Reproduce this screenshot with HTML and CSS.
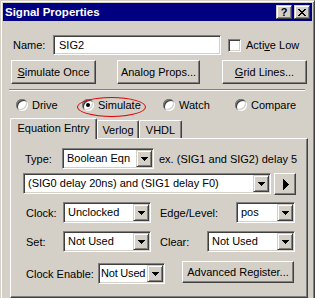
FILE: index.html
```html
<!DOCTYPE html>
<html>
<head>
<meta charset="utf-8">
<link rel="stylesheet" href="styles.css">
</head>
<body>
<div class="window">
  <div class="titlebar">
    <span class="title">Signal Properties</span>
    <div class="caps">
      <span class="cbtn q">?</span>
      <span class="cbtn"><svg width="8" height="7" viewBox="0 0 8 7" shape-rendering="crispEdges"><g fill="#000"><rect x="0" y="0" width="2" height="1"/><rect x="6" y="0" width="2" height="1"/><rect x="1" y="1" width="2" height="1"/><rect x="5" y="1" width="2" height="1"/><rect x="2" y="2" width="4" height="1"/><rect x="3" y="3" width="2" height="1"/><rect x="2" y="4" width="4" height="1"/><rect x="1" y="5" width="2" height="1"/><rect x="5" y="5" width="2" height="1"/><rect x="0" y="6" width="2" height="1"/><rect x="6" y="6" width="2" height="1"/></g></svg></span>
    </div>
  </div>
  <div class="client">
    <div class="row name-row">
      <span class="name-lbl">Name:</span>
      <div class="field name-field">SIG2</div>
      <span class="check"></span>
      <span class="check-lbl">Acti<u>v</u>e Low</span>
    </div>
    <div class="row btn-row">
      <div class="btn b1"><span><u>S</u>imulate Once</span></div>
      <div class="btn b2"><span>Analog Props...</span></div>
      <div class="btn b3"><span><u>G</u>rid Lines...</span></div>
    </div>
    <div class="sep"></div>
    <div class="row radio-row">
      <div class="ritem r1"><span class="radio"></span><span>Drive</span></div>
      <div class="ritem r2"><span class="radio on"></span><span>Simulate</span><span class="ring"></span></div>
      <div class="ritem r3"><span class="radio"></span><span>Watch</span></div>
      <div class="ritem r4"><span class="radio"></span><span>Compare</span></div>
    </div>
    <div class="tabs">
      <div class="tab active t1">Equation Entry</div>
      <div class="tab t2">Verlog</div>
      <div class="tab t3">VHDL</div>
    </div>
    <div class="panel">
      <div class="prow pr1">
        <span class="plbl l-type">Type:</span>
        <div class="combo c-type"><span class="ctext">Boolean Eqn</span><span class="drop"><svg width="7" height="4" viewBox="0 0 7 4" shape-rendering="crispEdges"><g fill="#000"><rect x="0" y="0" width="7" height="1"/><rect x="1" y="1" width="5" height="1"/><rect x="2" y="2" width="3" height="1"/><rect x="3" y="3" width="1" height="1"/></g></svg></span></div>
        <span class="ex">ex. (SIG1 and SIG2) delay 5</span>
      </div>
      <div class="prow pr2">
        <div class="combo c-long"><span class="ctext">(SIG0 delay 20ns) and (SIG1 delay F0)</span><span class="drop"><svg width="7" height="4" viewBox="0 0 7 4" shape-rendering="crispEdges"><g fill="#000"><rect x="0" y="0" width="7" height="1"/><rect x="1" y="1" width="5" height="1"/><rect x="2" y="2" width="3" height="1"/><rect x="3" y="3" width="1" height="1"/></g></svg></span></div>
        <div class="btn play"><svg width="6" height="11" viewBox="0 0 6 11" shape-rendering="crispEdges"><g fill="#000"><rect x="0" y="0" width="1" height="11"/><rect x="1" y="1" width="1" height="9"/><rect x="2" y="2" width="1" height="7"/><rect x="3" y="3" width="1" height="5"/><rect x="4" y="4" width="1" height="3"/><rect x="5" y="5" width="1" height="1"/></g></svg></div>
      </div>
      <div class="prow pr3">
        <span class="plbl l-clock">Clock:</span>
        <div class="combo c-88"><span class="ctext">Unclocked</span><span class="drop"><svg width="7" height="4" viewBox="0 0 7 4" shape-rendering="crispEdges"><g fill="#000"><rect x="0" y="0" width="7" height="1"/><rect x="1" y="1" width="5" height="1"/><rect x="2" y="2" width="3" height="1"/><rect x="3" y="3" width="1" height="1"/></g></svg></span></div>
        <span class="plbl l-edge">Edge/Level:</span>
        <div class="combo c-pos"><span class="ctext">pos</span><span class="drop"><svg width="7" height="4" viewBox="0 0 7 4" shape-rendering="crispEdges"><g fill="#000"><rect x="0" y="0" width="7" height="1"/><rect x="1" y="1" width="5" height="1"/><rect x="2" y="2" width="3" height="1"/><rect x="3" y="3" width="1" height="1"/></g></svg></span></div>
      </div>
      <div class="prow pr4">
        <span class="plbl l-clock">Set:</span>
        <div class="combo c-88"><span class="ctext">Not Used</span><span class="drop"><svg width="7" height="4" viewBox="0 0 7 4" shape-rendering="crispEdges"><g fill="#000"><rect x="0" y="0" width="7" height="1"/><rect x="1" y="1" width="5" height="1"/><rect x="2" y="2" width="3" height="1"/><rect x="3" y="3" width="1" height="1"/></g></svg></span></div>
        <span class="plbl l-clear">Clear:</span>
        <div class="combo c-88"><span class="ctext">Not Used</span><span class="drop"><svg width="7" height="4" viewBox="0 0 7 4" shape-rendering="crispEdges"><g fill="#000"><rect x="0" y="0" width="7" height="1"/><rect x="1" y="1" width="5" height="1"/><rect x="2" y="2" width="3" height="1"/><rect x="3" y="3" width="1" height="1"/></g></svg></span></div>
      </div>
      <div class="prow pr5">
        <span class="plbl l-ce">Clock Enable:</span>
        <div class="combo c-ce"><span class="ctext">Not Used</span><span class="drop"><svg width="7" height="4" viewBox="0 0 7 4" shape-rendering="crispEdges"><g fill="#000"><rect x="0" y="0" width="7" height="1"/><rect x="1" y="1" width="5" height="1"/><rect x="2" y="2" width="3" height="1"/><rect x="3" y="3" width="1" height="1"/></g></svg></span></div>
        <div class="btn adv"><span>Advanced Register...</span></div>
      </div>
    </div>
  </div>
</div>
</body>
</html>
```
FILE: styles.css
```css
* { box-sizing: border-box; }
html, body { margin: 0; padding: 0; }
body {
  background: #d4d0c8;
  font-family: "Liberation Sans", Arial, sans-serif;
  font-size: 11px;
  color: #000;
  overflow: hidden;
}
u { text-decoration: underline; text-underline-offset: 1px; }

.window {
  width: 315px;
  height: 302px;
  background: #d4d0c8;
  border: 1px solid;
  border-color: #d4d0c8 #404040 #404040 #d4d0c8;
  box-shadow: inset 1px 1px #fff, inset -1px -1px #808080;
  padding: 2px;
}

.titlebar {
  height: 18px;
  background: #000080;
  display: flex;
  align-items: center;
  justify-content: space-between;
  padding: 0 2px 0 2px;
}
.title { color: #fff; font-weight: bold; font-size: 11.5px; }
.caps { display: flex; gap: 2px; }
.cbtn {
  width: 16px; height: 14px;
  background: #d4d0c8;
  border: 1px solid;
  border-color: #d4d0c8 #404040 #404040 #d4d0c8;
  box-shadow: inset 1px 1px #fff, inset -1px -1px #808080;
  display: flex; align-items: center; justify-content: center;
}
.cbtn.q { font-weight: bold; font-size: 11px; line-height: 12px; }

.row { display: flex; align-items: center; }

.name-row { margin-top: 14px; height: 20px; }
.name-lbl { margin-left: 10px; width: 40px; }
.field, .combo {
  background: #fff;
  border: 1px solid;
  border-color: #808080 #fff #fff #808080;
  box-shadow: inset 1px 1px #404040, inset -1px -1px #d4d0c8;
}
.name-field { width: 168px; height: 20px; padding: 0 0 0 5px; line-height: 18px; }
.check {
  margin-left: 7px;
  width: 13px; height: 13px;
  background: #fff;
  border: 1px solid;
  border-color: #808080 #fff #fff #808080;
  box-shadow: inset 1px 1px #404040, inset -1px -1px #d4d0c8;
}
.check-lbl { margin-left: 5px; }

.btn {
  background: #d4d0c8;
  border: 1px solid;
  border-color: #fff #404040 #404040 #fff;
  box-shadow: inset -1px -1px #808080;
  display: flex; align-items: center; justify-content: center;
}
.btn-row { margin-top: 5px; height: 24px; }
.btn-row .btn { height: 24px; }
.b1 { margin-left: 8px; width: 85px; }
.b2 { margin-left: 21px; width: 83px; }
.b3 { margin-left: 22px; width: 85px; }

.sep {
  margin: 5px 0 0 6px;
  width: 296px; height: 2px;
  border-top: 1px solid #808080;
  border-bottom: 1px solid #fff;
}

.radio-row { margin-top: 6px; height: 16px; }
.ritem { display: flex; align-items: center; gap: 4px; position: relative; }
.r1 { margin-left: 13px; width: 66px; }
.r2 { width: 81px; }
.r3 { width: 72px; }
.radio {
  width: 12px; height: 12px;
  border-radius: 50%;
  background: #fff;
  box-shadow: inset 1px 1px #808080, inset -1px -1px #fff, inset 2px 2px #404040, inset -2px -2px #d4d0c8;
  display: flex; align-items: center; justify-content: center;
}
.radio.on::after {
  content: "";
  width: 4px; height: 4px;
  border-radius: 50%;
  background: #000;
}
.ring {
  position: absolute;
  left: -5px; top: -2px;
  width: 69px; height: 20px;
  border: 1px solid #e00000;
  border-radius: 50%;
}

.tabs {
  margin: 5px 0 0 7px;
  height: 20px;
  display: flex;
  align-items: flex-end;
}
.tab {
  height: 18px;
  background: #d4d0c8;
  border-top: 1px solid #fff;
  border-left: 1px solid #fff;
  border-right: 1px solid #404040;
  box-shadow: inset -1px 0 #808080;
  border-radius: 2px 2px 0 0;
  display: flex; align-items: center; justify-content: center;
}
.tab.active {
  height: 21px;
  margin-bottom: -1px;
  position: relative;
  z-index: 1;
  padding-bottom: 2px;
}
.t1 { width: 87px; }
.t2 { width: 42px; }
.t3 { width: 43px; }

.panel {
  margin-left: 7px;
  width: 298px;
  height: 160px;
  border: 1px solid;
  border-color: #fff #404040 #404040 #fff;
  box-shadow: inset -1px -1px #808080;
}
.prow { display: flex; align-items: center; }
.pr1 { margin-top: 9px; height: 21px; }
.pr2 { margin-top: 4px; height: 22px; align-items: flex-start; }
.pr3 { margin-top: 7px; height: 21px; }
.pr4 { margin-top: 8px; height: 21px; }
.pr5 { margin-top: 9px; height: 23px; align-items: flex-start; }
.pr5 .plbl { align-self: center; margin-top: 2px; }

.plbl { flex: none; }
.l-type { margin-left: 14px; width: 37px; }
.l-clock { margin-left: 15px; width: 37px; }
.l-edge { margin-left: 9px; width: 76px; }
.l-clear { margin-left: 9px; width: 47px; }
.l-ce { margin-left: 15px; width: 72px; }

.combo {
  height: 21px;
  padding: 1px;
  display: flex;
  flex: none;
}
.ctext { flex: 1; padding-left: 3px; line-height: 17px; white-space: nowrap; overflow: hidden; }
.drop {
  width: 16px; height: 17px;
  flex: none;
  background: #d4d0c8;
  border: 1px solid;
  border-color: #d4d0c8 #404040 #404040 #d4d0c8;
  box-shadow: inset 1px 1px #fff, inset -1px -1px #808080;
  display: flex; align-items: center; justify-content: center;
}
.c-type { width: 92px; }
.c-long { margin-left: 12px; width: 248px; }
.c-88 { width: 88px; }
.c-pos { width: 59px; }
.c-ce { width: 67px; margin-top: 2px; }
.c-ce .ctext { padding-left: 1px; letter-spacing: -0.2px; overflow: visible; }
.ex { margin-left: 5px; white-space: nowrap; }

.play { margin-left: 3px; width: 22px; height: 22px; padding-left: 1px; }
.adv { margin-left: 17px; width: 112px; height: 22px; }
```
